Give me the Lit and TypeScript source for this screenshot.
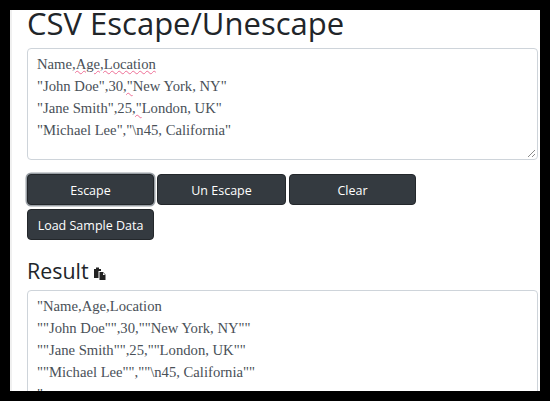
import { LitElement, html, css } from "lit";
import { customElement } from "lit/decorators.js";

@customElement("app-root")
export class AppRoot extends LitElement {
  static styles = css`
    :host {
      display: block;
      width: 550px;
      height: 401px;
      box-sizing: border-box;
      background: #000;
      padding: 10px;
      overflow: hidden;
    }
    .page {
      height: 381px;
      overflow: hidden;
      background: #fff;
      padding: 0 0 0 15px;
      box-sizing: border-box;
      border-left: 2px solid #f0f0f0;
      font-family: "Open Sans", "Noto Sans", sans-serif;
    }
    h1 {
      margin: -10px 0 2px;
      font-size: 31px;
      line-height: 46px;
      font-weight: 400;
      color: #212529;
      white-space: nowrap;
    }
    .area {
      position: relative;
      box-sizing: border-box;
      width: 511px;
      border: 1px solid #ced4da;
      border-radius: 4px;
      padding: 4px 9px;
      font-family: "Liberation Serif", serif;
      font-size: 14.67px;
      line-height: 22px;
      color: #495057;
      white-space: pre;
    }
    .source { height: 112px; }
    .result { height: 120px; overflow: hidden; }
    .sq {
      text-decoration: underline wavy #ee6f96 1px;
      text-underline-offset: 1px;
    }
    .grip {
      position: absolute;
      right: 1px;
      bottom: 1px;
      width: 10px;
      height: 10px;
    }
    .buttons {
      display: flex;
      flex-wrap: wrap;
      gap: 4px 3px;
      width: 400px;
      margin: 14px 0 0;
    }
    button {
      box-sizing: border-box;
      width: 127px;
      height: 31px;
      padding: 1px 0 0;
      border: 1px solid #23272b;
      border-radius: 4px;
      background: #343a40;
      color: #fff;
      font-family: inherit;
      font-size: 12.5px;
      font-weight: 400;
    }
    button.focus { box-shadow: 0 0 0 1.5px #9aa0a6; }
    button.second { width: 129px; }
    h2 {
      display: flex;
      align-items: center;
      gap: 4px;
      margin: 17px 0 5px;
      font-size: 21.4px;
      line-height: 28px;
      font-weight: 400;
      color: #212529;
    }
    h2 svg { width: 13px; height: 13px; margin-top: 4px; }
  `;

  render() {
    return html`
      <div class="page">
        <h1>CSV Escape/Unescape</h1>
        <div class="area source">Name<span class="sq">,Age,Location</span>
"John Doe",30<span class="sq">,"</span>New York, NY"
"Jane Smith",25<span class="sq">,"</span>London, UK"
"Michael Lee","\\n45, California"
          <svg class="grip" viewBox="0 0 10 10" fill="none" stroke="#8a8a8a" stroke-width="1">
            <path d="M2 9 9 2M6 9 9 6" />
          </svg>
        </div>
        <div class="buttons">
          <button class="focus">Escape</button>
          <button class="second">Un Escape</button>
          <button>Clear</button>
          <button>Load Sample Data</button>
        </div>
        <h2>
          Result
          <svg viewBox="0 0 13 13">
            <path fill="#222" d="M1 2h2V0.5h3V2h2v2H5.5v7H1z" />
            <path fill="#222" fill-rule="evenodd" d="M6.5 5H10l2.5 2.5V13h-6zM10 5.8V8h2.2z" />
          </svg>
        </h2>
        <div class="area result">"Name,Age,Location
""John Doe"",30,""New York, NY""
""Jane Smith"",25,""London, UK""
""Michael Lee"",""\\n45, California""
"</div>
      </div>
    `;
  }
}
